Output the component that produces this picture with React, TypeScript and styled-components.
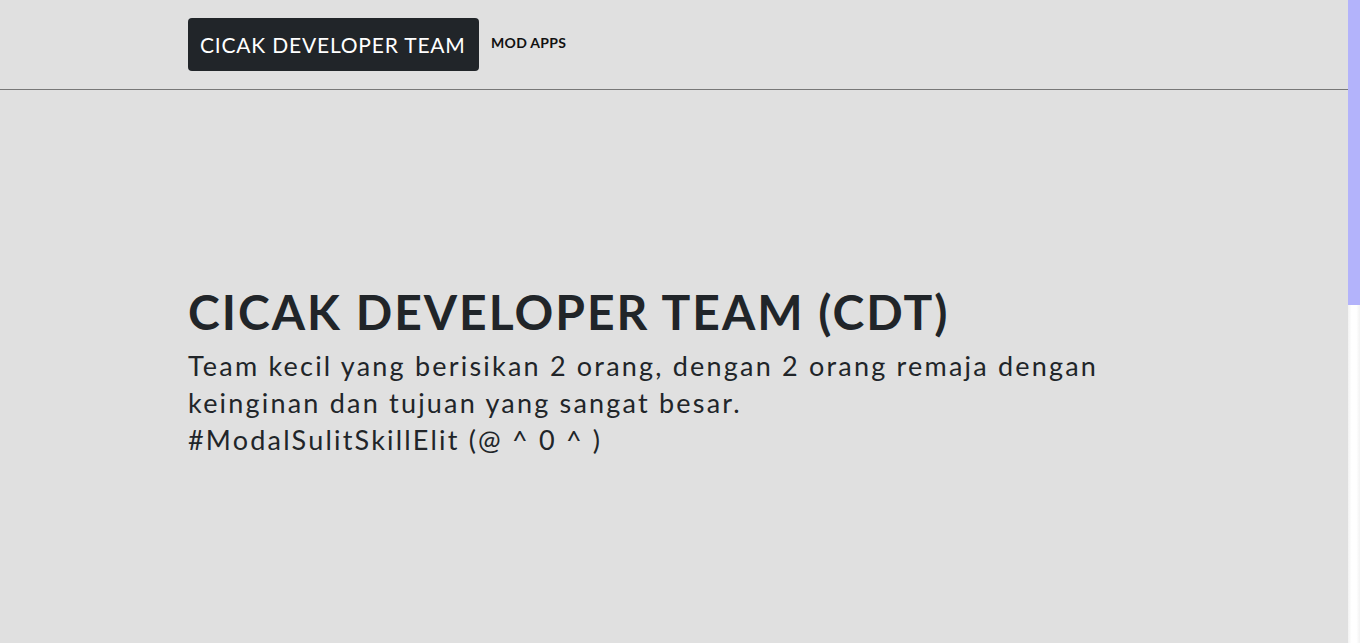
import React from "react";
import styled, { createGlobalStyle } from "styled-components";

const Global = createGlobalStyle`
  html, body { margin: 0; height: 100%; overflow: hidden; }
  body {
    background: #e0e0e0;
    font-family: Lato, "Open Sans", sans-serif;
    color: #212529;
  }
`;

const Shell = styled.div`
  display: flex;
  height: 100vh;
`;

const Main = styled.div`
  flex: 1;
  min-width: 0;
`;

const ScrollRail = styled.div`
  width: 12px;
  flex: none;
  background: linear-gradient(to right, #f2f2f2, #ffffff 30%, #ffffff 70%, #f2f2f2);
  display: flex;
  flex-direction: column;
`;

const ScrollThumb = styled.div`
  height: 305px;
  background: #b3b3fb;
`;

const NavBar = styled.nav`
  border-bottom: 1px solid #777777;
`;

const Container = styled.div`
  width: 972px;
  margin: 0 auto;
`;

const NavInner = styled(Container)`
  display: flex;
  align-items: center;
  gap: 12px;
  padding: 18px 0;
`;

const Brand = styled.a`
  display: flex;
  align-items: center;
  height: 53px;
  padding: 0 12px;
  box-sizing: border-box;
  width: 291px;
  background: #212529;
  color: #ffffff;
  border-radius: 4px;
  font-size: 21px;
  letter-spacing: 0.8px;
  text-decoration: none;
  white-space: nowrap;
`;

const NavLink = styled.a`
  font-size: 14px;
  font-weight: 700;
  letter-spacing: 0.3px;
  color: #111111;
  text-decoration: none;
  margin-bottom: 4px;
`;

const Hero = styled.section`
  padding-top: 194px;
`;

const Title = styled.h1`
  margin: 0;
  font-size: 48px;
  font-weight: 700;
  line-height: 56px;
  letter-spacing: 2px;
`;

const Lead = styled.p`
  margin: 7px 0 0;
  font-size: 27px;
  line-height: 37px;
  letter-spacing: 2.2px;
`;

export default function App() {
  return (
    <Shell>
      <Global />
      <Main>
        <NavBar>
          <NavInner>
            <Brand>CICAK DEVELOPER TEAM</Brand>
            <NavLink>MOD APPS</NavLink>
          </NavInner>
        </NavBar>
        <Hero>
          <Container>
            <Title>CICAK DEVELOPER TEAM (CDT)</Title>
            <Lead>
              Team kecil yang berisikan 2 orang, dengan 2 orang remaja dengan
              keinginan dan tujuan yang sangat besar.
              <br />
              #ModalSulitSkillElit (@ ^ 0 ^ )
            </Lead>
          </Container>
        </Hero>
      </Main>
      <ScrollRail>
        <ScrollThumb />
      </ScrollRail>
    </Shell>
  );
}
